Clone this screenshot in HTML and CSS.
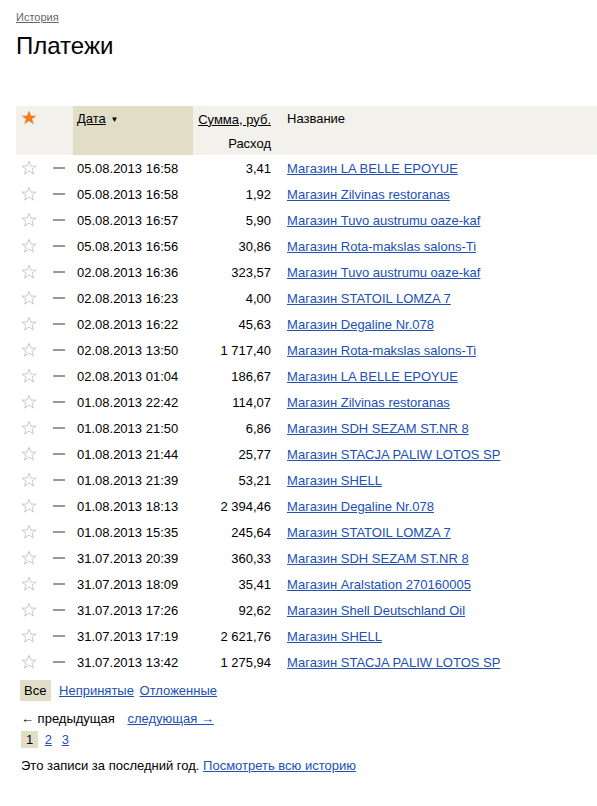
FILE: index.html
```html
<!DOCTYPE html>
<html lang="ru">
<head>
<meta charset="utf-8">
<title>Платежи</title>
<link rel="stylesheet" href="styles.css">
</head>
<body>
<div class="page">
  <a class="crumb" href="#">История</a>
  <h1 class="title">Платежи</h1>
  <table class="pay">
    <thead>
      <tr class="h1row">
        <th class="c-star" rowspan="2"><svg class="star-on" viewBox="0 0 16 16" width="16" height="16"><path d="M8 0.8l2.1 5h5.3l-4.3 3.2 1.6 5.3L8 11.1 3.3 14.3l1.6-5.3L0.6 5.8h5.3z" fill="#f47a1f"/></svg></th>
        <th class="c-dash" rowspan="2"></th>
        <th class="c-date" rowspan="2"><a href="#" class="hl">Дата</a> <span class="tri">▼</span></th>
        <th class="c-sum"><a href="#" class="hl">Сумма, руб.</a></th>
        <th class="c-name" rowspan="2">Название</th>
      </tr>
      <tr class="h2row">
        <th class="c-sum">Расход</th>
      </tr>
    </thead>
    <tbody id="rows"></tbody>
  </table>
  <div class="filters">
    <span class="sel">Все</span>
    <a href="#">Непринятые</a>
    <a href="#">Отложенные</a>
  </div>
  <div class="pager">
    <span class="prev">← предыдущая</span>
    <a href="#">следующая →</a>
  </div>
  <div class="pages">
    <span class="sel">1</span>
    <a href="#">2</a>
    <a href="#">3</a>
  </div>
  <p class="note">Это записи за последний год. <a href="#">Посмотреть всю историю</a></p>
</div>
<script src="app.js"></script>
</body>
</html>
```
FILE: app.js
```js
const data = [
  ["05.08.2013 16:58","3,41","Магазин LA BELLE EPOYUE"],
  ["05.08.2013 16:58","1,92","Магазин Zilvinas restoranas"],
  ["05.08.2013 16:57","5,90","Магазин Tuvo austrumu oaze-kaf"],
  ["05.08.2013 16:56","30,86","Магазин Rota-makslas salons-Ti"],
  ["02.08.2013 16:36","323,57","Магазин Tuvo austrumu oaze-kaf"],
  ["02.08.2013 16:23","4,00","Магазин STATOIL LOMZA 7"],
  ["02.08.2013 16:22","45,63","Магазин Degaline Nr.078"],
  ["02.08.2013 13:50","1 717,40","Магазин Rota-makslas salons-Ti"],
  ["02.08.2013 01:04","186,67","Магазин LA BELLE EPOYUE"],
  ["01.08.2013 22:42","114,07","Магазин Zilvinas restoranas"],
  ["01.08.2013 21:50","6,86","Магазин SDH SEZAM ST.NR 8"],
  ["01.08.2013 21:44","25,77","Магазин STACJA PALIW LOTOS SP"],
  ["01.08.2013 21:39","53,21","Магазин SHELL"],
  ["01.08.2013 18:13","2 394,46","Магазин Degaline Nr.078"],
  ["01.08.2013 15:35","245,64","Магазин STATOIL LOMZA 7"],
  ["31.07.2013 20:39","360,33","Магазин SDH SEZAM ST.NR 8"],
  ["31.07.2013 18:09","35,41","Магазин Aralstation 270160005"],
  ["31.07.2013 17:26","92,62","Магазин Shell Deutschland Oil"],
  ["31.07.2013 17:19","2 621,76","Магазин SHELL"],
  ["31.07.2013 13:42","1 275,94","Магазин STACJA PALIW LOTOS SP"]
];
const star = '<svg class="star-off" viewBox="0 0 16 16" width="16" height="16"><path d="M8 1.3l2 4.8h5.1l-4.1 3 1.5 5L8 11 3.5 14.1l1.5-5-4.1-3h5.1z" fill="#fff" stroke="#c9c9c9" stroke-width="1"/></svg>';
const tb = document.getElementById('rows');
tb.innerHTML = data.map(r =>
  `<tr><td class="c-star">${star}</td><td class="c-dash"><span class="dash"></span></td><td class="c-date">${r[0]}</td><td class="c-sum">${r[1].replace(' ', '&nbsp;')}</td><td class="c-name"><a href="#">${r[2]}</a></td></tr>`
).join('');
```
FILE: styles.css
```css
html, body { margin: 0; padding: 0; background: #fff; }
body { font-family: Arial, "Liberation Sans", sans-serif; font-size: 13px; color: #000; }
.page { padding: 10px 0 0 16px; }
a { color: #2150b5; }
.crumb { display: block; font-size: 11px; color: #666; line-height: 15px; }
.title { font-size: 24px; font-weight: normal; margin: 7px 0 0; line-height: 28px; }
.pay { border-collapse: collapse; width: 100%; margin-top: 46px; }
.pay th { font-weight: normal; text-align: left; background: #f3f1eb; padding: 0; height: 24px; vertical-align: middle; }
.pay th.c-date { background: #e2ddc7; vertical-align: top; padding-top: 5px; }
.pay th.c-star { vertical-align: top; padding-top: 4px; text-align: left; }
.pay th.c-name { vertical-align: top; padding-top: 5px; }
.pay .h1row th.c-sum { padding-top: 1px; }
.hl { color: #000; }
.tri { font-size: 8px; position: relative; top: -1px; margin-left: 1px; }
.c-star { width: 29px; padding: 0; }
.star-on { display: block; margin-left: 5px; }
.star-off { display: block; margin-left: 5px; }
.c-dash { width: 28px; }
.dash { display: block; width: 12px; height: 2px; background: #999; margin-left: 8px; }
.c-date { width: 116px; padding-left: 4px !important; }
.c-sum { width: 78px; text-align: right !important; padding-right: 12px !important; }
.c-name { padding-left: 4px !important; }
.pay td { height: 26px; padding: 0; vertical-align: middle; white-space: nowrap; }
.filters { margin-top: 5px; margin-left: 4px; height: 21px; line-height: 21px; }
.filters .sel { display: inline-block; background: #e2ddc7; padding: 0 5px 0 4px; margin-right: 4px; }
.filters a { margin-right: 2px; }
.pager { margin: 9px 0 0 5px; line-height: 18px; }
.pager .prev { margin-right: 9px; }
.pages { margin: 3px 0 0 5px; line-height: 17px; }
.pages .sel { display: inline-block; background: #e2ddc7; padding: 0 5px; margin-right: 3px; }
.pages a { margin-right: 6px; }
.note { margin: 9px 0 0 5px; line-height: 17px; }
```
